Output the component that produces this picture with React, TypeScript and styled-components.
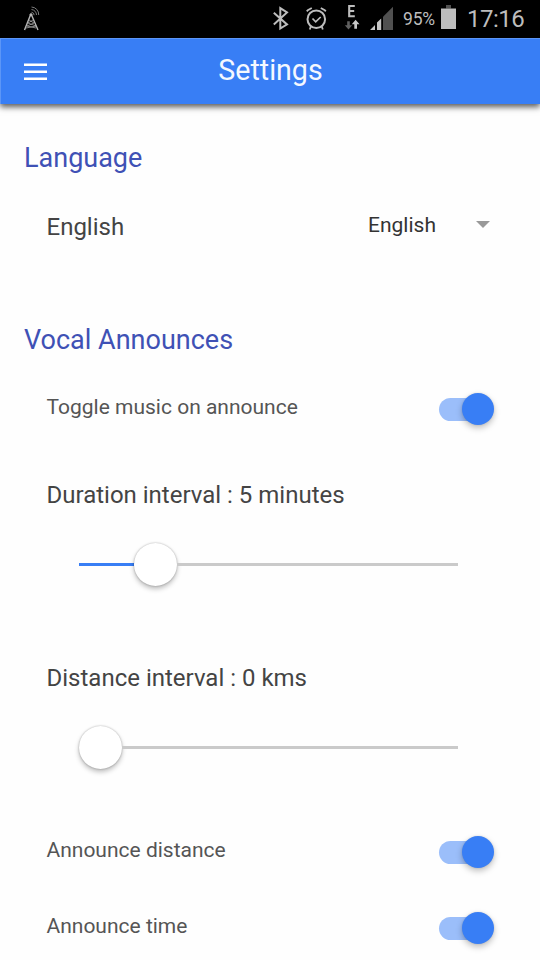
import React from "react";
import styled, { createGlobalStyle } from "styled-components";

const GlobalStyle = createGlobalStyle`
  * { box-sizing: border-box; }
  body { margin: 0; background: #fefefe; font-family: Roboto, sans-serif; overflow: hidden; }
`;

const Screen = styled.div`
  width: 540px;
  height: 960px;
  overflow: hidden;
  background: #fefefe;
  display: flex;
  flex-direction: column;
`;

const StatusBar = styled.div`
  height: 38px;
  flex: none;
  background: #000;
  display: flex;
  align-items: center;
  justify-content: space-between;
  padding: 0 15px 0 22px;
  color: #bdbdbd;
  svg { display: block; flex: none; }
`;

const StatusGroup = styled.div`
  display: flex;
  align-items: center;
`;

const BatteryText = styled.span`
  width: 38px;
  font-size: 17.5px;
  line-height: 38px;
  letter-spacing: -0.2px;
`;

const Clock = styled.span`
  width: 58px;
  font-size: 24px;
  letter-spacing: -0.5px;
  line-height: 38px;
  white-space: nowrap;
`;

const Toolbar = styled.header`
  height: 66px;
  flex: none;
  display: grid;
  grid-template-columns: 80px 1fr 80px;
  align-items: center;
  background: #387ef5;
  border-top: 1px solid #5c96f7;
  border-left: 1px solid #5c96f7;
  box-shadow: 0 3px 6px rgba(0, 0, 0, 0.65);
`;

const MenuButton = styled.button`
  border: 0;
  padding: 0 0 0 23px;
  background: none;
  display: flex;
  flex-direction: column;
  gap: 5px;
`;

const MenuBar = styled.span`
  width: 23px;
  height: 2px;
  background: #fff;
  box-shadow: 0 -1px 0 rgba(255, 255, 255, 0.5);
`;

const Title = styled.h1`
  margin: 0;
  padding-bottom: 2px;
  text-align: center;
  font-size: 28.6px;
  font-weight: 400;
  line-height: 63px;
  color: #f4f8ff;
`;

const Content = styled.main`
  display: flex;
  flex-direction: column;
  padding: 34px 50px 0 24px;
`;

const SectionTitle = styled.h2<{ $gap?: number }>`
  margin: ${(p) => p.$gap ?? 0}px 0 0;
  height: 40px;
  line-height: 40px;
  font-size: 27px;
  font-weight: 400;
  color: #3f51b5;
`;

const Row = styled.div<{ $top: number }>`
  margin: ${(p) => p.$top}px 0 0;
  padding-left: 22.5px;
  height: 40px;
  display: flex;
  align-items: center;
  justify-content: space-between;
`;

const Label = styled.span<{ $small?: boolean }>`
  font-size: ${(p) => (p.$small ? 21 : 24)}px;
  line-height: 40px;
  color: ${(p) => (p.$small ? "#555" : "#444")};
  white-space: nowrap;
`;

const Select = styled.div`
  width: 122px;
  height: 40px;
  margin-bottom: 4px;
  display: flex;
  align-items: center;
  justify-content: space-between;
  font-size: 21px;
  color: #333;
`;

const Caret = styled.span`
  margin-bottom: 1px;
  border: 7.5px solid transparent;
  border-top-color: #999;
  border-bottom: 0;
`;

const SwitchTrack = styled.span`
  width: 51px;
  height: 23px;
  margin: 4px 0 0;
  border-radius: 12px;
  background: #9bbefa;
  display: flex;
  align-items: center;
  justify-content: flex-end;
`;

const SwitchThumb = styled.span`
  flex: none;
  width: 32px;
  height: 32px;
  margin-right: -4px;
  border-radius: 50%;
  background: #387ef5;
  box-shadow: 0 3px 6px rgba(0, 0, 0, 0.25), 0 0 2px rgba(0, 0, 0, 0.12);
`;

const SliderBox = styled.div<{ $top: number }>`
  margin: ${(p) => p.$top}px 32px 0 54.5px;
  height: 44px;
  display: flex;
  align-items: center;
`;

const SliderLine = styled.span<{ $fill?: boolean; $width?: number }>`
  height: 3px;
  background: ${(p) => (p.$fill ? "#387ef5" : "#cacaca")};
  ${(p) => (p.$width !== undefined ? `width: ${p.$width}px;` : "flex: 1;")}
`;

const SliderThumb = styled.span`
  flex: none;
  width: 43px;
  height: 43px;
  border-radius: 50%;
  background: #fff;
  box-shadow: 0 0 2px rgba(0, 0, 0, 0.3), 0 3px 5px rgba(0, 0, 0, 0.25);
`;

const AntennaIcon = () => (
  <svg width="20" height="38" viewBox="22 0 20 38" fill="none" stroke="#b5b5b5">
    <path d="M24.5 30 30.5 15h1L38 30" strokeWidth="1.4" />
    <path d="M29 20l5 3-7 3 9 2M33 20l-5 3 8 3-10 2" strokeWidth="0.7" />
    <circle cx="31" cy="14.8" r="1.2" fill="#b5b5b5" strokeWidth="0.6" />
    <path d="M31.5 12.2a3 3 0 0 1 2.6 3M31.5 9.5a5.5 5.5 0 0 1 5 5.5M31.5 7a7.5 7.5 0 0 1 7.2 8" stroke="#888" strokeWidth="0.9" />
  </svg>
);

const SignalIcons = () => (
  <svg width="136" height="38" viewBox="267 0 136 38" fill="none" stroke="#bdbdbd">
    <path d="M273.8 12.8 287 24.4l-6.7 4.1V8.2l6.7 4.3-13.2 12" strokeWidth="2" />
    <circle cx="316.3" cy="19.3" r="8.8" strokeWidth="2" />
    <path d="m312.5 18.5 3.2 3.3 5-4.8" strokeWidth="1.7" />
    <path d="m306.8 11.3 1-1.2 4-2.1M325.8 11.3l-1-1.2-4-2.1M310.8 26.5l-1 3M321.8 26.5l1 3" strokeWidth="1.8" />
    <path d="M354.8 6h-5.6v10.2h5.6M349.2 11h5" strokeWidth="2.1" />
    <path d="M347.2 21.3h2.6v4h2.4l-3.7 4.2-3.7-4.2h2.4z" fill="#606060" stroke="none" />
    <path d="M354.3 28.7h2.7v-4.5h2.5l-3.9-4.4-3.8 4.4h2.5z" fill="#c8c8c8" stroke="none" />
    <path d="M370 30l5-5v5zM377 30v-7.4l4.2-4V30z" fill="#c5c5c5" stroke="none" />
    <path d="M383 30V16.7l10-10V30z" fill="#505050" stroke="none" />
  </svg>
);

const BatteryIcon = () => (
  <svg width="26" height="38" viewBox="441 0 26 38">
    <path d="M446 5h5v3.5h-5z" fill="#505050" />
    <path d="M441 8.5h15V29h-15z" fill="#bdbdbd" />
  </svg>
);

const Switch = () => (
  <SwitchTrack role="switch" aria-checked="true">
    <SwitchThumb />
  </SwitchTrack>
);

const Slider = ({ top, before }: { top: number; before: number }) => (
  <SliderBox $top={top}>
    <SliderLine $fill $width={before} />
    <SliderThumb />
    <SliderLine />
  </SliderBox>
);

export default function App() {
  return (
    <>
      <GlobalStyle />
      <Screen>
        <StatusBar>
          <AntennaIcon />
          <StatusGroup>
            <SignalIcons />
            <BatteryText>95%</BatteryText>
            <BatteryIcon />
            <Clock>17:16</Clock>
          </StatusGroup>
        </StatusBar>
        <Toolbar>
          <MenuButton aria-label="Menu">
            <MenuBar />
            <MenuBar />
            <MenuBar />
          </MenuButton>
          <Title>Settings</Title>
        </Toolbar>
        <Content>
          <SectionTitle>Language</SectionTitle>
          <Row $top={29}>
            <Label>English</Label>
            <Select>
              <span>English</span>
              <Caret />
            </Select>
          </Row>
          <SectionTitle $gap={73}>Vocal Announces</SectionTitle>
          <Row $top={27}>
            <Label $small>Toggle music on announce</Label>
            <Switch />
          </Row>
          <Row $top={48}>
            <Label>Duration interval : 5 minutes</Label>
          </Row>
          <Slider top={27} before={55.5} />
          <Row $top={72}>
            <Label>Distance interval : 0 kms</Label>
          </Row>
          <Slider top={27} before={0} />
          <Row $top={61}>
            <Label $small>Announce distance</Label>
            <Switch />
          </Row>
          <Row $top={36}>
            <Label $small>Announce time</Label>
            <Switch />
          </Row>
        </Content>
      </Screen>
    </>
  );
}
